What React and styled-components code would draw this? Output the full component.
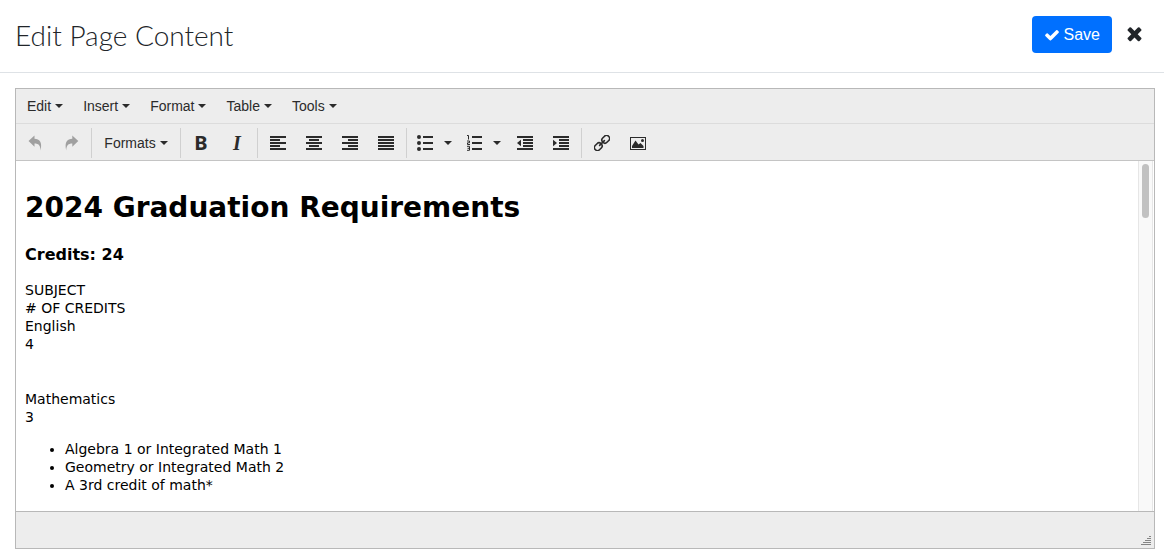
import styled, { createGlobalStyle } from "styled-components";

// style

const GlobalStyle = createGlobalStyle`
  * {
    box-sizing: border-box;
  }
  body {
    margin: 0;
    background: #fff;
    color: #212529;
    font-family: "Liberation Sans", Arial, sans-serif;
  }
`;

const Page = styled.div`
  display: flex;
  flex-direction: column;
  height: 100vh;
`;

const Header = styled.header`
  display: flex;
  align-items: center;
  justify-content: space-between;
  padding: 16px 19px 19px 15px;
  border-bottom: 1px solid #dee2e6;
`;

const Title = styled.h1`
  margin: 0;
  font-family: Lato, "Liberation Sans", sans-serif;
  font-size: 28px;
  font-weight: 300;
  line-height: 36px;
`;

const Actions = styled.div`
  display: flex;
  align-items: center;
  gap: 12px;
`;

const SaveButton = styled.button`
  display: flex;
  align-items: center;
  gap: 4px;
  height: 37px;
  padding: 0 12px;
  border: 0;
  border-radius: 4px;
  background: #0070ff;
  color: #fff;
  font: 16px "Liberation Sans", Arial, sans-serif;
`;

const CloseButton = styled.button`
  display: flex;
  padding: 0 0 2px;
  border: 0;
  background: none;
  color: #212529;
`;

const Main = styled.main`
  flex: 1;
  display: flex;
  min-height: 0;
  padding: 15px 9px 11px 15px;
`;

const Editor = styled.section`
  flex: 1;
  display: flex;
  flex-direction: column;
  min-width: 0;
  border: 1px solid #b8b8b8;
  background: #ededed;
`;

const MenuBar = styled.nav`
  display: flex;
  padding: 2px 1px;
  border-bottom: 1px solid #dcdcdc;
`;

const Toolbar = styled.div`
  display: flex;
  padding: 4px 1px 2px;
  border-bottom: 1px solid #c4c4c4;
`;

const Group = styled.div`
  display: flex;
  padding-right: 2px;

  & + & {
    padding-left: 2px;
    border-left: 1px solid #d0d0d0;
  }
`;

const ToolButton = styled.button`
  display: flex;
  align-items: center;
  justify-content: center;
  gap: 4px;
  height: 30px;
  padding: 0 10px;
  border: 0;
  background: none;
  color: ${(props) => (props.disabled ? "#a0a0a0" : "#2b2b2b")};
  font: 14px "Liberation Sans", Arial, sans-serif;
`;

const FormatsButton = styled(ToolButton)`
  min-width: 84px;
`;

const SplitMain = styled(ToolButton)`
  padding: 0 4px 0 8px;
`;

const SplitArrow = styled(ToolButton)`
  padding: 0 6px 0 7px;
`;

const Letter = styled.span`
  width: 16px;
  font-family: ${(props) =>
    props.$italic ? '"Liberation Serif", serif' : '"Noto Sans", sans-serif'};
  font-size: 20px;
  font-style: ${(props) => (props.$italic ? "italic" : "normal")};
  font-weight: 700;
  line-height: 30px;
  text-align: center;
`;

const Caret = styled.span`
  border: 4px solid transparent;
  border-top-color: currentColor;
  border-bottom: 0;
`;

const EditArea = styled.div`
  flex: 1;
  display: flex;
  min-height: 0;
  background: #fff;
`;

const Content = styled.div`
  flex: 1;
  overflow: hidden;
  padding: 29px 9px 0;
  outline: 0;
  color: #000;
  font-family: Verdana, "DejaVu Sans", sans-serif;
  font-size: 14px;
  line-height: 18px;

  h1 {
    margin: 0 0 18px;
    font-size: 28px;
    line-height: 36px;
  }
  h3 {
    margin: 0 0 16px;
    font-size: 16px;
    line-height: 21px;
  }
  p {
    margin: 0 0 14px;
  }
  p + p {
    margin-top: 37px;
  }
  ul {
    margin: 0;
    padding-left: 40px;
  }
`;

const ScrollTrack = styled.div`
  width: 15px;
  margin-right: 1px;
  padding: 3px;
  border: 1px solid #e6e6e6;
  border-width: 0 1px;
  background: #f9f9f9;
`;

const ScrollThumb = styled.div`
  height: 54px;
  border-radius: 4px;
  background: #c1c1c1;
`;

const StatusBar = styled.footer`
  display: flex;
  align-items: flex-end;
  justify-content: flex-end;
  height: 37px;
  padding: 3px;
  border-top: 1px solid #b8b8b8;
  color: #858585;
`;

// icons

const Icon = ({ size = 16, box = size, children }) => (
  <svg
    width={size}
    height={size}
    viewBox={`0 0 ${box} ${box}`}
    fill="currentColor"
    aria-hidden="true"
  >
    {children}
  </svg>
);

const CheckIcon = () => (
  <Icon size={16} box={1792}>
    <path d="M1671 566q0 40-28 68l-724 724-136 136q-28 28-68 28t-68-28l-136-136-362-362q-28-28-28-68t28-68l136-136q28-28 68-28t68 28l294 295 656-657q28-28 68-28t68 28l136 136q28 28 28 68z" />
  </Icon>
);

const TimesIcon = () => (
  <Icon size={21} box={1792}>
    <path d="M1490 1322q0 40-28 68l-136 136q-28 28-68 28t-68-28l-294-294-294 294q-28 28-68 28t-68-28l-136-136q-28-28-28-68t28-68l294-294-294-294q-28-28-28-68t28-68l136-136q28-28 68-28t68 28l294 294 294-294q28-28 68-28t68 28l136 136q28 28 28 68t-28 68l-294 294 294 294q28 28 28 68z" />
  </Icon>
);

const UndoIcon = () => (
  <Icon>
    <path d="M1.5 6L7.5.5V3.7C12.5 3.7 15.5 7 13.6 15.5C13.4 10.5 11.5 8.6 7.5 8.6V11.7z" />
  </Icon>
);

const RedoIcon = () => (
  <Icon>
    <path d="M15.3 6L9.3.5V3.7C4.3 3.7 1.3 7 3.2 15.5C3.4 10.5 5.3 8.6 9.3 8.6V11.7z" />
  </Icon>
);

const ROWS = [1, 4, 7, 10, 13];

// x and width of every second row
const SHORT_ROWS = {
  left: [0, 10],
  center: [3, 10],
  right: [6, 10],
  justify: [0, 16],
};

const AlignIcon = ({ align }) => (
  <Icon>
    {ROWS.map((y, i) => {
      const [x, width] = i % 2 ? SHORT_ROWS[align] : [0, 16];
      return <rect key={y} x={x} y={y} width={width} height="2" />;
    })}
  </Icon>
);

const BulletsIcon = () => (
  <Icon>
    {[2, 8, 14].map((y) => (
      <g key={y}>
        <circle cx="2" cy={y} r="2" />
        <rect x="6" y={y - 1} width="10" height="2" />
      </g>
    ))}
  </Icon>
);

const NumbersIcon = () => (
  <Icon>
    <path d="M6 1h10v2H6zM6 7h10v2H6zM6 13h10v2H6z" />
    <path
      d="M1 .5H2.5V4.5M1 6H3.5V7.8H1.5V9.5H4M1 11.3H3.5V15.3H1M1.5 13.3H3.5"
      fill="none"
      stroke="currentColor"
    />
  </Icon>
);

const IndentIcon = ({ out }) => (
  <Icon>
    <path d="M0 1h16v2H0zM6 4h10v2H6zM6 7h10v2H6zM6 10h10v2H6zM0 13h16v2H0z" />
    <path d={out ? "M4 4.8V11.2L0 8z" : "M0 4.8V11.2L4 8z"} />
  </Icon>
);

const LinkIcon = () => (
  <Icon>
    <g
      transform="rotate(-45 8 8)"
      fill="none"
      stroke="currentColor"
      strokeWidth="1.6"
    >
      <rect x="-1.4" y="5" width="8.2" height="6" rx="2.8" />
      <rect x="9.2" y="5" width="8.2" height="6" rx="2.8" />
      <path d="M4.6 8H11.4" strokeLinecap="round" />
    </g>
  </Icon>
);

const ImageIcon = () => (
  <Icon>
    <path d="M0 2h16v13H0zM1 3v11h14V3z" fillRule="evenodd" />
    <path d="M2 13V11L5.5 5.5L8.5 9.5L10.5 8L13.5 11V13z" />
    <circle cx="12.5" cy="5.5" r="1.5" />
  </Icon>
);

const GripIcon = () => (
  <Icon size={10}>
    <path d="M8 1h2v1H8zM6 3h4v1H6zM4 5h6v1H4zM2 7h8v1H2zM0 9h10v1H0z" />
  </Icon>
);

// code

const MENUS = ["Edit", "Insert", "Format", "Table", "Tools"];

const SplitButton = ({ label, children }) => (
  <>
    <SplitMain aria-label={label}>{children}</SplitMain>
    <SplitArrow aria-label={`${label} options`}>
      <Caret />
    </SplitArrow>
  </>
);

function App() {
  return (
    <Page>
      <GlobalStyle />
      <Header>
        <Title>Edit Page Content</Title>
        <Actions>
          <SaveButton>
            <CheckIcon />
            Save
          </SaveButton>
          <CloseButton aria-label="Close">
            <TimesIcon />
          </CloseButton>
        </Actions>
      </Header>
      <Main>
        <Editor>
          <MenuBar>
            {MENUS.map((menu) => (
              <ToolButton key={menu}>
                {menu}
                <Caret />
              </ToolButton>
            ))}
          </MenuBar>
          <Toolbar>
            <Group>
              <ToolButton disabled aria-label="Undo">
                <UndoIcon />
              </ToolButton>
              <ToolButton disabled aria-label="Redo">
                <RedoIcon />
              </ToolButton>
            </Group>
            <Group>
              <FormatsButton>
                Formats
                <Caret />
              </FormatsButton>
            </Group>
            <Group>
              <ToolButton aria-label="Bold">
                <Letter>B</Letter>
              </ToolButton>
              <ToolButton aria-label="Italic">
                <Letter $italic>I</Letter>
              </ToolButton>
            </Group>
            <Group>
              {Object.keys(SHORT_ROWS).map((align) => (
                <ToolButton key={align} aria-label={`Align ${align}`}>
                  <AlignIcon align={align} />
                </ToolButton>
              ))}
            </Group>
            <Group>
              <SplitButton label="Bullet list">
                <BulletsIcon />
              </SplitButton>
              <SplitButton label="Numbered list">
                <NumbersIcon />
              </SplitButton>
              <ToolButton aria-label="Decrease indent">
                <IndentIcon out />
              </ToolButton>
              <ToolButton aria-label="Increase indent">
                <IndentIcon />
              </ToolButton>
            </Group>
            <Group>
              <ToolButton aria-label="Insert link">
                <LinkIcon />
              </ToolButton>
              <ToolButton aria-label="Insert image">
                <ImageIcon />
              </ToolButton>
            </Group>
          </Toolbar>
          <EditArea>
            <Content
              contentEditable
              suppressContentEditableWarning
              spellCheck={false}
              role="textbox"
              aria-label="Page content"
            >
              <h1>2024 Graduation Requirements</h1>
              <h3>Credits: 24</h3>
              <p>
                SUBJECT
                <br /># OF CREDITS
                <br />
                English
                <br />4
              </p>
              <p>
                Mathematics
                <br />3
              </p>
              <ul>
                <li>Algebra 1 or Integrated Math 1</li>
                <li>Geometry or Integrated Math 2</li>
                <li>A 3rd credit of math*</li>
              </ul>
            </Content>
            <ScrollTrack>
              <ScrollThumb />
            </ScrollTrack>
          </EditArea>
          <StatusBar>
            <GripIcon />
          </StatusBar>
        </Editor>
      </Main>
    </Page>
  );
}

export default App;
